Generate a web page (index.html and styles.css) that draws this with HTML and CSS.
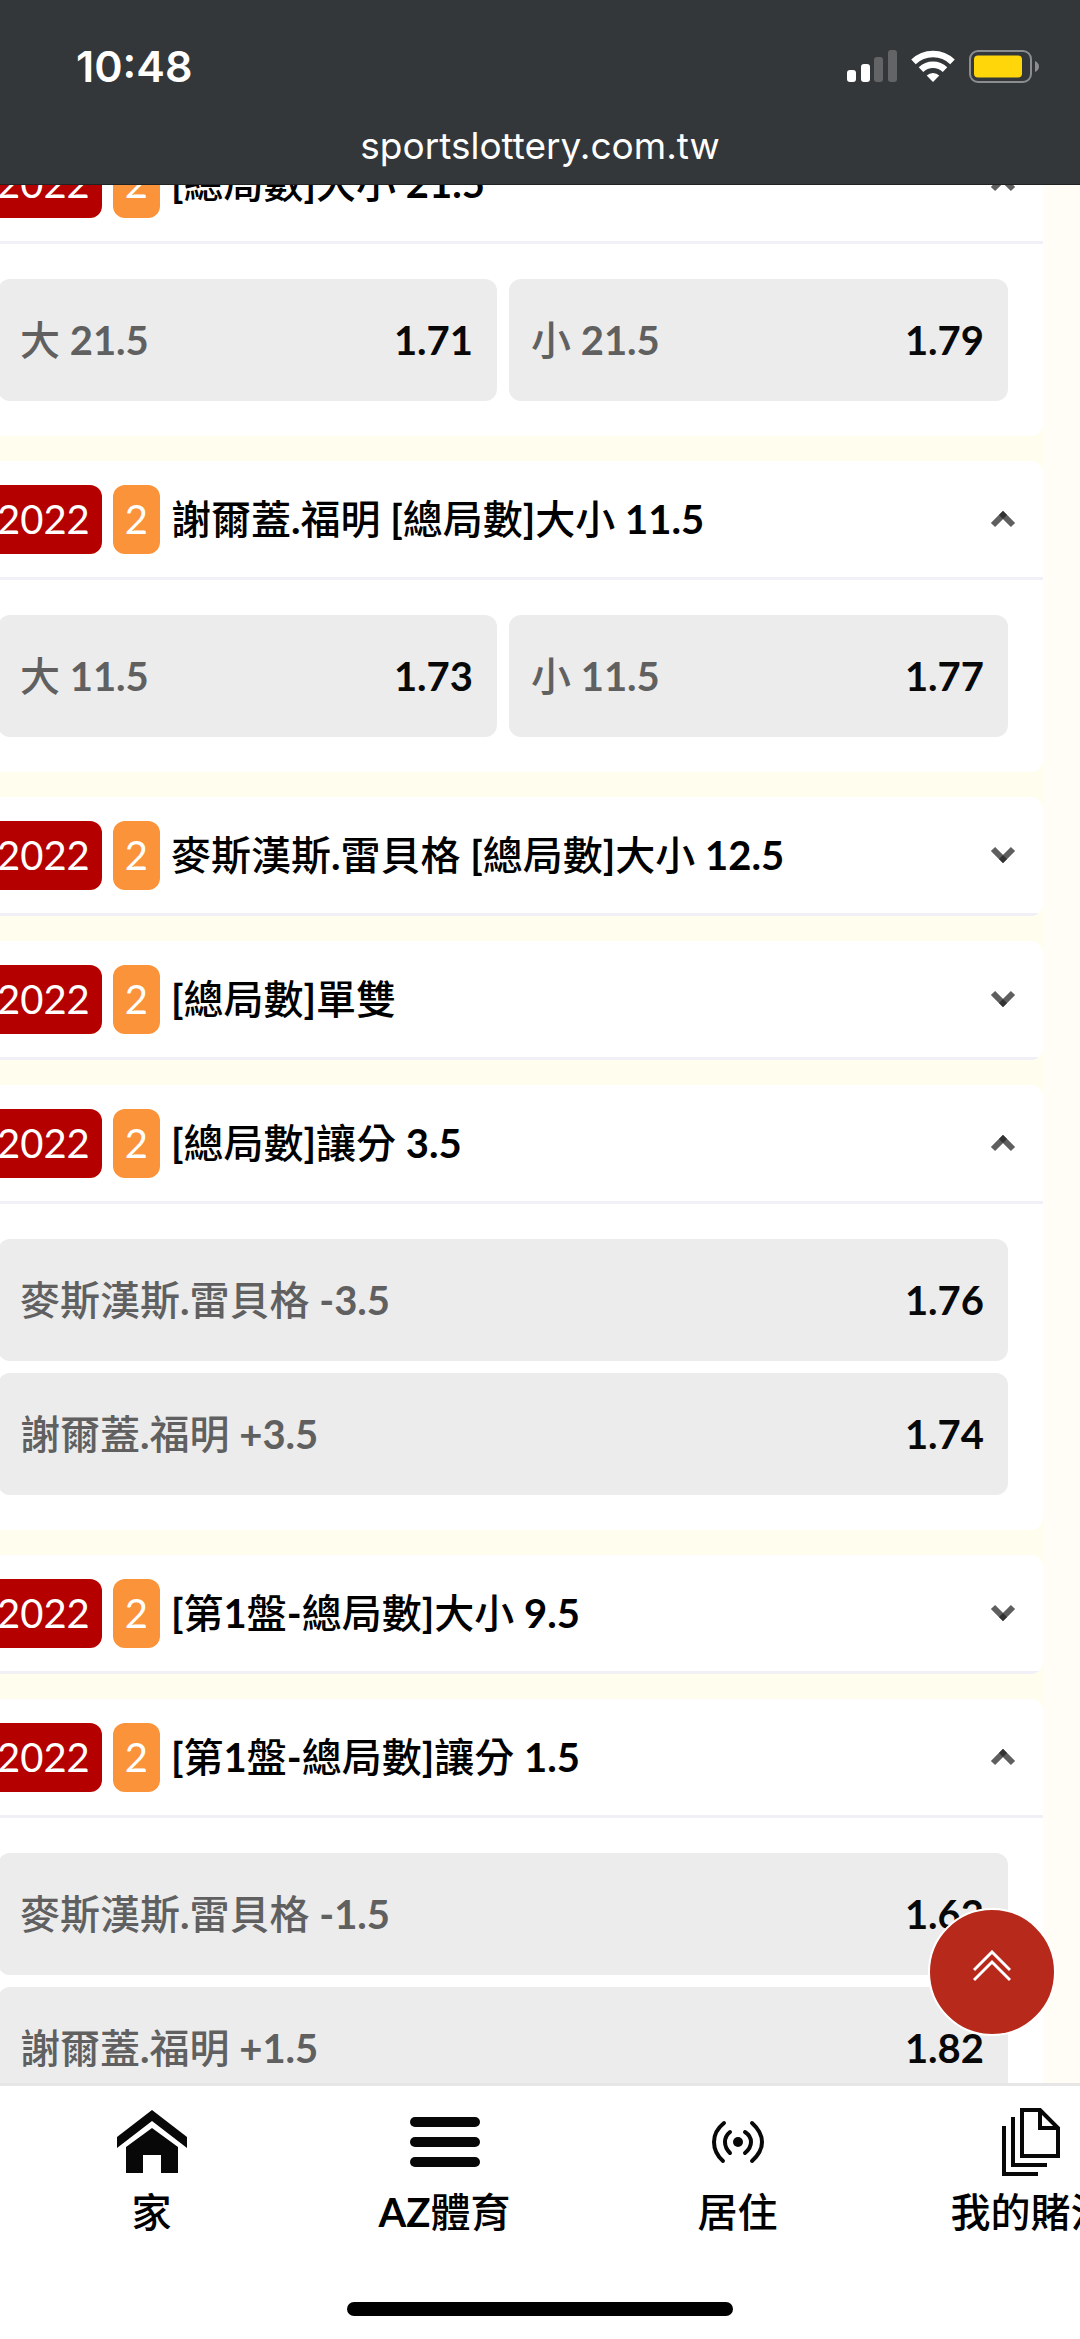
FILE: index.html
```html
<!DOCTYPE html>
<html lang="zh-Hant">
<head>
    <meta charset="utf-8">
    <meta name="viewport" content="width=device-width, initial-scale=1">
    <title>sportslottery.com.tw</title>
    <link rel="stylesheet" href="styles.css">
</head>
<body>
    <!-- shared arrow shape -->
    <svg class="defs" width="0" height="0">
        <symbol id="chevron" viewBox="0 0 26 18">
            <path d="M3 15 13 5l10 10" fill="none" stroke="#5f5f5f" stroke-width="6"/>
            <path d="M9 5 13 1l4 4-4 4z" fill="#333"/>
        </symbol>
    </svg>

    <header class="topbar">
        <div class="status">
            <span class="time">10:48</span>
            <div class="status-icons">
                <svg width="50" height="32" viewBox="0 0 50 32">
                    <rect x="0" y="20" width="9" height="12" rx="3" fill="#fff"/>
                    <rect x="14" y="14" width="9" height="18" rx="3" fill="#fff"/>
                    <rect x="27" y="7" width="9" height="25" rx="3" fill="#636466"/>
                    <rect x="41" y="0" width="9" height="32" rx="3" fill="#636466"/>
                </svg>
                <svg width="44" height="32" viewBox="0 0 44 32" fill="none" stroke="#fff" stroke-width="6.500">
                    <path d="M2.500 11.800a28 28 0 0 1 39 0"/>
                    <path d="M10 19.700a17.300 17.300 0 0 1 24 0"/>
                    <path d="M22 32l-6.300-6.500a9 9 0 0 1 12.600 0z" fill="#fff" stroke="none"/>
                </svg>
                <svg width="71" height="33" viewBox="0 0 71 33">
                    <rect x="1" y="1" width="61" height="31" rx="8" fill="none" stroke="#8b8d8f" stroke-width="2"/>
                    <rect x="5" y="5.500" width="48" height="22" rx="4" fill="#ffd60a"/>
                    <path d="M66 11q4 2 4 5.500t-4 5.500z" fill="#8b8d8f"/>
                </svg>
            </div>
        </div>
        <div class="url">sportslottery.com.tw</div>
    </header>

    <main class="markets">
        <section class="market">
            <button class="market-head">
                <span class="tag tag-year">2022</span>
                <span class="tag tag-count">2</span>
                <span class="market-title"><b>[</b>總局數<b>]</b>大小<b> 21.5</b></span>
                <svg class="arrow"><use href="#chevron"/></svg>
            </button>
            <div class="odds two">
                <button class="odd"><span>大<b> 21.5</b></span><b>1.71</b></button>
                <button class="odd"><span>小<b> 21.5</b></span><b>1.79</b></button>
            </div>
        </section>

        <section class="market">
            <button class="market-head">
                <span class="tag tag-year">2022</span>
                <span class="tag tag-count">2</span>
                <span class="market-title">謝爾蓋<b>.</b>福明<b> [</b>總局數<b>]</b>大小<b> 11.5</b></span>
                <svg class="arrow"><use href="#chevron"/></svg>
            </button>
            <div class="odds two">
                <button class="odd"><span>大<b> 11.5</b></span><b>1.73</b></button>
                <button class="odd"><span>小<b> 11.5</b></span><b>1.77</b></button>
            </div>
        </section>

        <section class="market">
            <button class="market-head">
                <span class="tag tag-year">2022</span>
                <span class="tag tag-count">2</span>
                <span class="market-title">麥斯漢斯<b>.</b>雷貝格<b> [</b>總局數<b>]</b>大小<b> 12.5</b></span>
                <svg class="arrow down"><use href="#chevron"/></svg>
            </button>
        </section>

        <section class="market">
            <button class="market-head">
                <span class="tag tag-year">2022</span>
                <span class="tag tag-count">2</span>
                <span class="market-title"><b>[</b>總局數<b>]</b>單雙</span>
                <svg class="arrow down"><use href="#chevron"/></svg>
            </button>
        </section>

        <section class="market">
            <button class="market-head">
                <span class="tag tag-year">2022</span>
                <span class="tag tag-count">2</span>
                <span class="market-title"><b>[</b>總局數<b>]</b>讓分<b> 3.5</b></span>
                <svg class="arrow"><use href="#chevron"/></svg>
            </button>
            <div class="odds">
                <button class="odd"><span>麥斯漢斯<b>.</b>雷貝格<b> -3.5</b></span><b>1.76</b></button>
                <button class="odd"><span>謝爾蓋<b>.</b>福明<b> +3.5</b></span><b>1.74</b></button>
            </div>
        </section>

        <section class="market">
            <button class="market-head">
                <span class="tag tag-year">2022</span>
                <span class="tag tag-count">2</span>
                <span class="market-title"><b>[</b>第<b>1</b>盤<b>-</b>總局數<b>]</b>大小<b> 9.5</b></span>
                <svg class="arrow down"><use href="#chevron"/></svg>
            </button>
        </section>

        <section class="market">
            <button class="market-head">
                <span class="tag tag-year">2022</span>
                <span class="tag tag-count">2</span>
                <span class="market-title"><b>[</b>第<b>1</b>盤<b>-</b>總局數<b>]</b>讓分<b> 1.5</b></span>
                <svg class="arrow"><use href="#chevron"/></svg>
            </button>
            <div class="odds">
                <button class="odd"><span>麥斯漢斯<b>.</b>雷貝格<b> -1.5</b></span><b>1.62</b></button>
                <button class="odd"><span>謝爾蓋<b>.</b>福明<b> +1.5</b></span><b>1.82</b></button>
            </div>
        </section>
    </main>

    <footer class="bottom">
        <button class="to-top" aria-label="回到頂部">
            <svg width="38" height="32" viewBox="0 0 38 32" fill="none" stroke="#fff" stroke-width="3">
                <path d="M1 20 19 2l18 18M1 30l18-18 18 18"/>
            </svg>
        </button>
        <nav class="tabs">
            <a class="tab" href="#">
                <svg width="70" height="70" viewBox="0 0 70 70" fill="#080808">
                    <path d="M35 4 70 31v11L35 15 0 42V31z"/>
                    <path d="M35 22 61 41v26H44V49H26v18H9V41z"/>
                </svg>
                <span>家</span>
            </a>
            <a class="tab" href="#">
                <svg width="70" height="70" viewBox="0 0 70 70" fill="#080808">
                    <rect y="11" width="70" height="10" rx="5"/>
                    <rect y="31" width="70" height="10" rx="5"/>
                    <rect y="51" width="70" height="10" rx="5"/>
                </svg>
                <span><b>AZ</b>體育</span>
            </a>
            <a class="tab" href="#">
                <svg width="70" height="70" viewBox="0 0 70 70" fill="none" stroke="#080808" stroke-width="4" stroke-linecap="round">
                    <path d="M21 17q-10 8-10 19t9 19M27 26q-5 4-5 10t5 11M49 17q10 9 10 19t-10 19M42 26q6 4 6 10t-6 11"/>
                    <circle cx="35" cy="36" r="5" fill="#080808" stroke="none"/>
                </svg>
                <span>居住</span>
            </a>
            <a class="tab" href="#">
                <svg width="70" height="70" viewBox="0 0 70 70" fill="none" stroke="#080808" stroke-width="4">
                    <path d="M26 4h18l18 18v28H26zM44 4v18h18M17 11v48h34M8 20v48h34"/>
                </svg>
                <span>我的賭注</span>
            </a>
        </nav>
        <div class="home-bar"></div>
    </footer>
</body>
</html>
```

FILE: styles.css
```css
*{
    box-sizing:border-box;
}
body{
    margin:0;
    height:100vh;
    display:flex;
    flex-direction:column;
    overflow:hidden;
    background-color:#fffdf6;
    font-family:Lato, "Noto Sans CJK TC", sans-serif;
    font-size:40px;
    line-height:48px;
    color:#000;
}
button{
    margin:0;
    border:0;
    font:inherit;
    color:inherit;
    text-align:left;
}
b{
    font-weight:700;
}
.defs{
    position:absolute;
}

/* top bar */
.topbar{
    position:relative;
    z-index:1;
    flex:none;
    height:185px;
    padding-top:42px;
    background-color:#34373a;
    border-bottom:1px solid #202224;
    color:#fff;
    font-family:Inter, sans-serif;
}
.status{
    display:flex;
    justify-content:space-between;
    align-items:center;
    height:48px;
    padding:0 40px 0 76px;
}
.time{
    font-size:43px;
    font-weight:600;
}
.status-icons{
    display:flex;
    align-items:center;
    gap:14px;
}
.url{
    margin-top:32px;
    text-align:center;
    font-size:37px;
}

/* the list is scrolled a little down and to the right */
.markets{
    flex:1;
    min-height:0;
    overflow:hidden;
    margin-right:37px;
    background-color:#fffdee;
}
.market{
    margin:0 0 25px -37px;
    border-radius:12px;
    background-color:#fff;
    overflow:hidden;
}
.market:first-child{
    margin-top:-60px;
}
.market-head{
    display:flex;
    align-items:center;
    gap:11px;
    width:100%;
    height:119px;
    padding:0 27px 0 22px;
    border-bottom:3px solid #f0f0f6;
    background-color:#fff;
    font-weight:500;
}
.tag{
    padding:10px 12px;
    border-radius:12px;
    line-height:49px;
    font-weight:400;
    color:#fff;
}
.tag-year{
    background-color:#b50000;
}
.tag-count{
    background-color:#fa9339;
}
.market-title{
    flex:1;
}
.arrow{
    width:26px;
    height:18px;
}
.down{
    transform:rotate(180deg);
}
.odds{
    display:grid;
    gap:12px;
    padding:35px;
}
.two{
    grid-template-columns:1fr 1fr;
}
.odd{
    display:flex;
    justify-content:space-between;
    align-items:center;
    height:122px;
    padding:0 24px 0 22px;
    border-radius:12px;
    background-color:#ececec;
    font-weight:500;
    color:#080808;
}
.odd span{
    color:#606060;
}

/* bottom bar */
.bottom{
    position:relative;
    flex:none;
    padding-bottom:23px;
    border-top:3px solid #e6e6e6;
    background-color:#fff;
}
.to-top{
    position:absolute;
    right:24px;
    bottom:303px;
    display:flex;
    justify-content:center;
    align-items:center;
    width:128px;
    height:128px;
    padding:0 0 12px;
    border:2px solid #fff;
    border-radius:50%;
    background-color:#b7291b;
}
.tabs{
    display:flex;
    padding:20px 0 0 5px;
    overflow:hidden;
}
.tab{
    flex:0 0 293px;
    display:flex;
    flex-direction:column;
    align-items:center;
    gap:12px;
    color:#000;
    font-weight:500;
    text-decoration:none;
}
.home-bar{
    width:386px;
    height:14px;
    margin:66px auto 0;
    border-radius:7px;
    background-color:#000;
}
```
